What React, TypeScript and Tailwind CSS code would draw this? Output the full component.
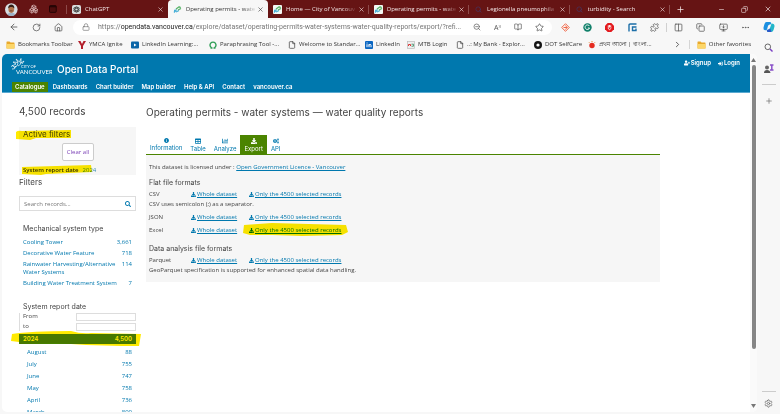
import React from "react";
import {
  FaChartBar, FaCogs, FaDownload, FaInfoCircle, FaSearch, FaSignInAlt, FaTable, FaUserPlus,
} from "react-icons/fa";
import {
  ArrowLeft, BookOpen, Boxes, ChevronRight, Columns2, Copy, Ellipsis, File, House, Lock, Minus,
  MonitorDown, Plus, Puzzle, RotateCw, Search, Settings, Star, X, ZoomOut,
} from "lucide-react";

const UI = "font-['Open_Sans','Noto_Sans',sans-serif]";
const SITE = "font-['Inter','Liberation_Sans',sans-serif]";
const SMALL = "font-['Open_Sans','Inter',sans-serif]";

function CityFavicon({ boxed = true }: { boxed?: boolean }) {
  return (
    <svg viewBox="0 0 9 9" className="size-[9px] shrink-0" aria-hidden="true">
      {boxed && <rect width="9" height="9" rx="1" fill="#f4f8f4" />}
      <path d="M1 7.5 3.5 4.500M1 5.500h2M3 7 6 5.500" stroke="#4ab0d8" strokeWidth="1.300" fill="none" />
      <path d="M3 4 6.500 1.500M5 5 8 3.500M6.500 1.500 7.500 3" stroke="#58b368" strokeWidth="1.300" fill="none" />
    </svg>
  );
}

function ChatIcon() {
  return (
    <svg viewBox="0 0 10 10" className="size-[9px] shrink-0" aria-hidden="true">
      <rect width="10" height="10" rx="2" fill="#d9dcdc" />
      <g fill="none" stroke="#3d3d3d" strokeWidth=".8">
        <ellipse cx="5" cy="5" rx="1.600" ry="3.400" />
        <ellipse cx="5" cy="5" rx="1.600" ry="3.400" transform="rotate(60 5 5)" />
        <ellipse cx="5" cy="5" rx="1.600" ry="3.400" transform="rotate(120 5 5)" />
      </g>
    </svg>
  );
}

const tabs = [
  { title: "ChatGPT", icon: <ChatIcon /> },
  { title: "Operating permits - wate", icon: <CityFavicon boxed={false} />, active: true },
  { title: "Home — City of Vancouv", icon: <CityFavicon /> },
  { title: "Operating permits - wate", icon: <CityFavicon /> },
  { title: "Legionella pneumophila", icon: <Search className="mx-px size-[7px] shrink-0 text-[#3f3b6e]" /> },
  { title: "turbidity - Search", icon: <Search className="mx-px size-[7px] shrink-0 text-[#3f3b6e]" /> },
];

function TabBar() {
  return (
    <div className="flex h-[18px] shrink-0 items-stretch bg-[#661414] text-[#f3e6e6]">
      <div className="flex w-[67px] shrink-0 items-center gap-[11px] pl-[5px]">
        <svg viewBox="0 0 14 14" className="size-[13px]" aria-hidden="true">
          <circle cx="7" cy="7" r="7" fill="#d8dde2" />
          <path d="M2.500 12.500c1-2.500 8-2.500 9 0A7 7 0 0 1 2.500 12.500" fill="#9db1c6" />
          <ellipse cx="7" cy="6.500" rx="3.200" ry="4.300" fill="#b1764f" />
          <path d="M3.600 6C3 0 11 0 10.400 6 9.500 3.500 4.500 3.500 3.600 6" fill="#332019" />
          <path d="M5.500 8.500h3" stroke="#5a2c20" strokeWidth=".7" />
        </svg>
        <Boxes className="size-[10px] text-[#d9b8b8]" />
        <svg viewBox="0 0 8 8" className="size-[8px]" aria-hidden="true">
          <rect x=".5" y=".5" width="7" height="7" rx="1" fill="#4d0d0d" stroke="#240505" />
          <path d="M.5 1.500h7" stroke="#240505" strokeWidth="1.500" />
        </svg>
        <span className="ml-[-2px] h-[9px] w-px shrink-0 bg-[#8d4a4a]" />
      </div>
      <div className="flex min-w-0 flex-1 items-stretch">
        {tabs.map((t, i) => (
          <div
            key={i}
            className={
              t.active
                ? "flex min-w-0 flex-1 items-center rounded-t-[4px] bg-[#f7f7f7] pl-[5px] pr-[4px] text-[#333]"
                : "flex min-w-0 flex-1 items-center pl-[5px] pr-[4px]"
            }
          >
            {t.icon}
            <span className="ml-[4px] min-w-[71px] text-[6px] whitespace-nowrap [mask-image:linear-gradient(to_right,black_80%,transparent)]">
              {t.title}
            </span>
            <button aria-label="Close tab" className="ml-auto">
              <X className="size-[7px]" />
            </button>
            {!t.active && i > 1 && <span className="ml-[3px] -mr-[4px] h-[9px] w-px bg-[#8d4a4a]" />}
          </div>
        ))}
      </div>
      <div className="flex w-[110px] shrink-0 items-center justify-between pl-[6px] pr-[8px]">
        <button aria-label="New tab"><Plus className="size-[9px]" /></button>
        <div className="flex gap-[16px]">
          <button aria-label="Minimize"><Minus className="size-[7px]" /></button>
          <button aria-label="Restore"><Copy className="size-[7px] -scale-x-100" /></button>
          <button aria-label="Close"><X className="size-[8px]" /></button>
        </div>
      </div>
    </div>
  );
}

function AddressBar() {
  return (
    <div className="flex h-[18px] shrink-0 items-center text-[#555]">
      <div className="flex w-[73px] shrink-0 items-center gap-[13px] pl-[9px]">
        <button aria-label="Back"><ArrowLeft className="size-[10px]" /></button>
        <button aria-label="Refresh"><RotateCw className="size-[9px]" /></button>
        <button aria-label="Home"><House className="size-[9px]" /></button>
      </div>
      <div className="flex h-[15px] min-w-0 flex-1 items-center rounded-full bg-white pr-[8px] pl-[9px]">
        <Lock className="size-[8px] shrink-0 text-[#777]" />
        <span className="ml-[8px] min-w-0 flex-1 font-['Roboto','Open_Sans',sans-serif] text-[7px] whitespace-nowrap text-[#777]">
          https://<span className="text-[#222]">opendata.vancouver.ca</span>
          /explore/dataset/operating-permits-water-systems-water-quality-reports/export/?refi...
        </span>
        <div className="flex w-[71px] shrink-0 items-center justify-between">
          <ZoomOut className="size-[8px]" />
          <span className="text-[7px] leading-none">A<sup className="text-[4px]">))</sup></span>
          <BookOpen className="size-[8px]" />
          <Star className="size-[9px]" />
        </div>
      </div>
      <div className="flex w-[228px] shrink-0 items-center justify-between pr-[5px] pl-[9px]">
        <svg viewBox="0 0 9 9" className="size-[9px]" aria-hidden="true">
          <path d="m4.500 .7 3.800 3.800-3.800 3.800L.7 4.500z" fill="none" stroke="#f0694a" strokeWidth="1" />
          <path d="M2.500 4.500h4M4.500 2.500 6 4.500 4.500 6.500" fill="none" stroke="#f0694a" />
        </svg>
        <svg viewBox="0 0 9 9" className="size-[9px]" aria-hidden="true">
          <circle cx="4.500" cy="4.500" r="4.200" fill="#11806a" />
          <path d="M6.400 3A2.300 2.300 0 1 0 6.600 5H4.800" fill="none" stroke="#fff" strokeWidth=".9" />
        </svg>
        <svg viewBox="0 0 9 9" className="size-[9px]" aria-hidden="true">
          <path d="M2.700 0h3.600L9 2.700v3.600L6.300 9H2.700L0 6.300V2.700z" fill="#e3191d" />
          <path d="M3.300 4.500V2.300M4.500 4.500V2M5.700 4.500V2.300M3.300 4.500v1.300Q4.500 8 6.400 5" fill="none" stroke="#fff" strokeWidth=".9" />
        </svg>
        <svg viewBox="0 0 9 9" className="size-[9px]" aria-hidden="true">
          <path d="M8.500 1H2.200Q1 1 1 2.200V8.500M8.500 4H4.500v3.500h3.500V5.500" fill="none" stroke="#1d6fa8" strokeWidth="1.400" />
        </svg>
        <Puzzle className="size-[9px]" />
        <span className="-mx-[6px] h-[9px] w-px bg-[#d0d0d0]" />
        <Columns2 className="size-[9px]" />
        <Copy className="size-[9px]" />
        <MonitorDown className="size-[9px]" />
        <Ellipsis className="size-[9px]" />
        <svg viewBox="0 0 12 12" className="size-[12px]" aria-hidden="true">
          <path d="M3.500 1h3.200Q8 1 8.300 2.300L7.500 3.500Q5.500 3 5 5L4 8.500Q3.500 9.500 2 9.200 0 9 .5 6.500L1.500 3Q2 1 3.500 1" fill="#1b8fe0" />
          <path d="M8.500 2.500Q11.800 2.500 11.500 5.500L10.500 9Q10 11 8 11H5.500Q4 11 3.700 9.500L5 8.500Q6.500 9 7 7z" fill="#22b6c9" />
          <path d="M8.500 11H5.500Q4 11 3.700 9.500L5 8.500Q6.500 9 7 7z" fill="#2a57c9" />
        </svg>
      </div>
    </div>
  );
}

function Folder() {
  return (
    <svg viewBox="0 0 9 8" className="h-[8px] w-[9px] shrink-0" aria-hidden="true">
      <path d="M.5 1Q.5.5 1 .5h2.500l1 1H8Q8.500 1.500 8.500 2v5q0 .5-.5.5H1Q.5 7.500.5 7z" fill="#e9a92c" />
      <path d="M.5 3h8v4q0 .5-.5.5H1Q.5 7.500.5 7z" fill="#fcd668" />
    </svg>
  );
}

const bookmarks = [
  { w: "w-[72px]", label: "Bookmarks Toolbar", icon: <Folder /> },
  {
    w: "w-[53px]", label: "YMCA Ignite",
    icon: <svg viewBox="0 0 8 8" className="size-[8px] shrink-0"><path d="M0 0h2.500L4 3 5.500 0H8L5 5v3H3V5z" fill="#b3202c" /></svg>,
  },
  {
    w: "w-[78px]", label: "LinkedIn Learning:...",
    icon: <svg viewBox="0 0 8 8" className="size-[8px] shrink-0"><rect y=".5" width="8" height="7" rx="1" fill="#0b66a8" /><path d="M3 2.500 5.500 4 3 5.500z" fill="#fff" /></svg>,
  },
  {
    w: "w-[79px]", label: "Paraphrasing Tool -...",
    icon: <svg viewBox="0 0 8 8" className="size-[8px] shrink-0"><path d="M2.500 6.700a3 3 0 1 1 3 0M1.500 7h2M4.500 7h2" fill="none" stroke="#2f9e56" strokeWidth="1.400" /></svg>,
  },
  { w: "w-[77px]", label: "Welcome to Standar...", icon: <File className="size-[8px] shrink-0" /> },
  {
    w: "w-[42px]", label: "LinkedIn",
    icon: <svg viewBox="0 0 8 8" className="size-[8px] shrink-0"><rect width="8" height="8" rx="1" fill="#0a66c2" /><path d="M2 3.200v3M4 6.200v-3M4 4.500q0-1.200 1-1.200t1 1.200v1.700M2 1.500v.9" fill="none" stroke="#fff" /></svg>,
  },
  {
    w: "w-[49px]", label: "MTB Login",
    icon: <svg viewBox="0 0 8 8" className="size-[8px] shrink-0"><rect x=".5" y=".5" width="7" height="7" fill="#eee" stroke="#bbb" strokeWidth=".7" /><path d="M1.500 5V3.500h2V5" stroke="#d33" fill="none" /><path d="M4.500 3.200h2v2h-2" stroke="#589c7a" fill="none" /></svg>,
  },
  { w: "w-[78px]", label: "..: My Bank - Explor...", icon: <File className="size-[8px] shrink-0" /> },
  {
    w: "w-[54px]", label: "DOT SelfCare",
    icon: <svg viewBox="0 0 8 8" className="size-[8px] shrink-0"><circle cx="4" cy="4" r="4" fill="#151515" /><circle cx="4" cy="4" r="1.600" fill="#fff" /></svg>,
  },
  {
    w: "w-[70px]", label: "প্রথম আলো | বাংলা...",
    icon: <svg viewBox="0 0 8 8" className="size-[8px] shrink-0"><circle cx="4" cy="4.500" r="2.700" fill="#e52c20" /><path d="M4 0v1M1 1.300l.7.700M7 1.300l-.7.700" stroke="#e8862f" /></svg>,
  },
];

function BookmarkBar() {
  return (
    <div className="flex h-[17px] shrink-0 items-center pl-[6px] text-[6px] text-[#333]">
      {bookmarks.map((b) => (
        <a key={b.label} href="#" className={`${b.w} flex shrink-0 items-center gap-[3px] whitespace-nowrap`}>
          {b.icon}
          {b.label}
        </a>
      ))}
      <div className="ml-auto flex items-center pr-[29px]">
        <ChevronRight className="size-[9px]" />
        <span className="mx-[7px] h-[9px] w-px bg-[#d5d5d5]" />
        <a href="#" className="flex items-center gap-[3px] whitespace-nowrap"><Folder />Other favorites</a>
      </div>
    </div>
  );
}

function Marker({ className, d, box }: { className: string; d: string; box: string }) {
  return (
    <svg viewBox={box} preserveAspectRatio="none" aria-hidden="true" className={`pointer-events-none absolute mix-blend-multiply ${className}`}>
      <path d={d} fill="#ffea00" />
    </svg>
  );
}

function Header() {
  const links = ["Dashboards", "Chart builder", "Map builder", "Help & API", "Contact", "vancouver.ca"];
  return (
    <header className="flex h-[39px] shrink-0 flex-col justify-between border-b border-[#5aa9d0] bg-[#0078ae] text-white">
      <div className="flex items-start justify-between pr-[10px] pl-[8px]">
        <div className="flex items-end">
          <svg viewBox="0 0 42 18" className="mt-[4px] h-[18px] w-[42px]" role="img" aria-label="City of Vancouver">
            <g fill="none" stroke="#fff" strokeWidth=".7">
              <path d="M1 8.500 6 6 3 4 8 4.500 6 1 9.500 4 11 .5 11 5 14 3 12 6" />
              <path d="M2 11q3 1 4-3M4 9q4 0 4-4M8 8q3-1 3-4M2 7l3 3" />
            </g>
            <text x="11" y="10" fontSize="4" fill="#fff" fontFamily="Lato, sans-serif">CITY OF</text>
            <text x="6" y="16" fontSize="6" fill="#fff" fontFamily="Lato, sans-serif">VANCOUVER</text>
          </svg>
          <h1 className="ml-[5px] text-[10px] leading-[14px] font-medium">Open Data Portal</h1>
        </div>
        <div className="mt-[5px] flex gap-[7px] text-[6px] leading-[8px] font-semibold">
          <a href="#" className="flex items-center gap-px"><FaUserPlus className="size-[6px]" />Signup</a>
          <a href="#" className="flex items-center gap-px"><FaSignInAlt className="size-[5px]" />Login</a>
        </div>
      </div>
      <nav className="flex gap-[2px] pl-[10px] text-[6px] leading-[10px] font-semibold">
        <a href="#" className="bg-[#4b8400] px-[3px]">Catalogue</a>
        {links.map((l) => <a key={l} href="#" className="px-[3px]">{l}</a>)}
      </nav>
    </header>
  );
}

const systems = [
  ["Cooling Tower", "3,661"],
  ["Decorative Water Feature", "718"],
  ["Rainwater Harvesting/Alternative Water Systems", "114"],
  ["Building Water Treatment System", "7"],
];
const months = [["August", "88"], ["July", "755"], ["June", "747"], ["May", "758"], ["April", "736"], ["March", "800"]];

function Filters() {
  return (
    <aside className="w-[117px] shrink-0 text-[#444]">
      <h2 className="mt-[11px] text-[10px] leading-[14px]">4,500 records</h2>
      <section className="relative mt-[9px] flex h-[48px] flex-col bg-[#f6f6f6] pt-[2px] pl-[4px]">
        <Marker className="-left-[3px] top-[2px] h-[11px] w-[56px]" box="0 0 56 11" d="M0 3Q2 1 6 2L55 1 55 9 20 9 14 11 0 10z" />
        <Marker className="left-[2px] top-[38px] h-[11px] w-[72px]" box="0 0 72 11" d="M1 2 70 0 71 7 25 9 20 10 1 9z" />
        <h3 className="text-[8px] leading-[10px]">Active filters</h3>
        <button className={`mt-[4px] ml-[39px] w-[32px] rounded-[2px] border border-[#ccc] bg-white text-[6px] leading-[16px] text-[#7a3fb5] ${SMALL}`}>Clear all</button>
        <p className={`mt-[5px] flex gap-[4px] text-[6px] leading-[8px] ${SMALL}`}>
          <b className="font-semibold text-[#333]">System report date</b>
          <a href="#" className="text-[#3c8fae]">2024</a>
        </p>
      </section>
      <h3 className="mt-[2px] text-[8px] leading-[10px]">Filters</h3>
      <form className="mt-[9px] flex h-[15px] items-center border border-[#ddd] bg-white px-[4px]">
        <input aria-label="Search records" placeholder="Search records..." className={`min-w-0 flex-1 text-[6px] leading-[8px] outline-none placeholder:text-[#777] ${SMALL}`} />
        <button type="button" aria-label="Search"><FaSearch className="size-[6px] text-[#0078ae]" /></button>
      </form>
      <h3 className="mt-[13px] pl-[4px] text-[7px] leading-[10px]">Mechanical system type</h3>
      <ul className={`mt-[4px] flex flex-col gap-[3px] pr-[4px] pl-[4px] text-[6px] leading-[8px] text-[#0078ae] ${SMALL}`}>
        {systems.map(([n, c]) => (
          <li key={n}>
            <a href="#" className="flex justify-between"><span className="w-[98px]">{n}</span><span>{c}</span></a>
          </li>
        ))}
      </ul>
      <h3 className="mt-[15px] pl-[4px] text-[7px] leading-[10px]">System report date</h3>
      <div className={`mt-px flex flex-col gap-[2px] border-l border-[#ddd] pl-[3px] text-[6px] leading-[7px] ${SMALL}`}>
        <label className="flex justify-between">From<input className="h-[8px] w-[60px] border border-[#ddd] bg-white" /></label>
        <label className="flex justify-between">to<input className="h-[8px] w-[60px] border border-[#ddd] bg-white" /></label>
      </div>
      <div className="relative mt-[3px]">
        <Marker
          className="-left-[8px] -top-[3px] z-10 h-[16px] w-[131px]" box="0 0 131 16"
          d="M1 3Q20 0 60 0 70 3 80 2L130 3 128 15 110 15 75 14 45 12 9 13 8 11 0 10z"
        />
        <a href="#" className="flex justify-between bg-[#478300] px-[4px] text-[6px] leading-[10px] font-semibold text-white">
          <span>2024</span><span>4,500</span>
        </a>
      </div>
      <ul className={`mt-[2px] pr-[4px] pl-[8px] text-[6px] leading-[12px] text-[#0078ae] ${SMALL}`}>
        {months.map(([n, c]) => (
          <li key={n}><a href="#" className="flex justify-between"><span>{n}</span><span>{c}</span></a></li>
        ))}
      </ul>
    </aside>
  );
}

function FormatRow({ name, marked }: { name: string; marked?: boolean }) {
  const link = "flex items-center gap-px underline";
  return (
    <div className="flex leading-[10px]">
      <span className="w-[42px]">{name}</span>
      <span className="flex w-[58px] text-[#0078ae]">
        <a href="#" className={link}><FaDownload className="size-[5px]" />Whole dataset</a>
      </span>
      <span className="relative text-[#0078ae]">
        {marked && (
          <Marker
            className="-left-[7px] -top-[2px] h-[14px] w-[106px]" box="0 0 106 14"
            d="M2 2 30 0 104 2 106 9 100 12 60 13 30 12 8 12 1 10z"
          />
        )}
        <a href="#" className={link}><FaDownload className="size-[5px]" />Only the 4500 selected records</a>
      </span>
    </div>
  );
}

function Dataset() {
  const tab = "flex flex-col items-center justify-center gap-px px-[4px]";
  const heading = `text-[7px] ${SITE}`;
  return (
    <main className="w-[514px] min-w-0 text-[#444]">
      <h2 className="mt-[12px] text-[10px] leading-[14px]">Operating permits - water systems — water quality reports</h2>
      <div className="mt-[16px] flex h-[20px] border-b border-[#4b8400] text-[6px] leading-[7px] text-[#0078ae]">
        <button className={tab}><FaInfoCircle className="size-[5px]" />Information</button>
        <button className={tab}><FaTable className="size-[6px]" />Table</button>
        <button className={tab}><FaChartBar className="size-[6px]" />Analyze</button>
        <button className="flex flex-col items-center justify-center gap-px bg-[#4b8400] px-[4px] text-white"><FaDownload className="size-[6px]" />Export</button>
        <button className={tab}><FaCogs className="size-[6px]" />API</button>
      </div>
      <div className={`bg-[#f6f6f6] px-[3px] pt-[7px] pb-[7px] text-[6px] leading-[10px] ${SMALL}`}>
        <p>This dataset is licensed under : <a href="#" className="text-[#0078ae] underline">Open Government Licence - Vancouver</a></p>
        <h3 className={`mt-[6px] ${heading}`}>Flat file formats</h3>
        <div className="mt-px"><FormatRow name="CSV" /></div>
        <p>CSV uses semicolon (;) as a separator.</p>
        <div className="mt-[3px] flex flex-col gap-[3px]"><FormatRow name="JSON" /><FormatRow name="Excel" marked /></div>
        <h3 className={`mt-[9px] ${heading}`}>Data analysis file formats</h3>
        <div className="mt-px"><FormatRow name="Parquet" /></div>
        <p>GeoParquet specification is supported for enhanced spatial data handling.</p>
      </div>
    </main>
  );
}

function EdgeSidebar() {
  return (
    <div className="-mt-[10px] flex w-[23px] shrink-0 flex-col items-center text-[#666]">
      <svg viewBox="0 0 9 9" className="size-[9px]" aria-hidden="true">
        <circle cx="3.800" cy="3.800" r="2.800" fill="none" stroke="#666" />
        <path d="m6 6 2.500 2.500" stroke="#7b3fc4" strokeWidth="1.400" />
      </svg>
      <svg viewBox="0 0 10 10" className="mt-[12px] size-[10px]" aria-hidden="true">
        <circle cx="3" cy="3.500" r="2" fill="#666" />
        <path d="M0 9Q0 6 3 6t3.500 3z" fill="#555" />
        <path d="M6 1h3.500M6 6h3.500M7.800 1v5" stroke="#8a52c9" strokeWidth="1.500" />
      </svg>
      <span className="mt-[10px] h-px w-[14px] bg-[#ccc]" />
      <button aria-label="Add app" className="mt-[12px]"><Plus className="size-[8px]" /></button>
      <span className="mt-auto h-px w-[14px] bg-[#ccc]" />
      <button aria-label="Settings" className="mt-[7px] mb-[6px]"><Settings className="size-[9px]" /></button>
    </div>
  );
}

export default function App() {
  return (
    <div className={`flex h-screen flex-col overflow-hidden bg-[#f7f7f7] ${UI}`}>
      <TabBar />
      <AddressBar />
      <BookmarkBar />
      <div className="flex min-h-0 flex-1">
        <div className={`mt-px mb-[2px] ml-[2px] flex min-w-0 flex-1 overflow-hidden rounded-[5px] bg-white ${SITE}`}>
          <div className="flex min-w-0 flex-1 flex-col">
            <Header />
            <div className="flex min-h-0 flex-1 gap-[10px] pl-[17px]">
              <Filters />
              <Dataset />
            </div>
          </div>
          <div className="flex w-[7px] shrink-0 flex-col items-center bg-[#fafafa] py-[4px]">
            <svg viewBox="0 0 5 4" className="h-[4px] w-[5px]"><path d="M0 4 2.500 0 5 4z" fill="#777" /></svg>
            <span className="mt-[3px] h-[81%] w-[4px] rounded-full bg-[#858585]" />
            <svg viewBox="0 0 5 4" className="mt-auto h-[4px] w-[5px]"><path d="M0 0h5L2.500 4z" fill="#777" /></svg>
          </div>
        </div>
        <EdgeSidebar />
      </div>
    </div>
  );
}
